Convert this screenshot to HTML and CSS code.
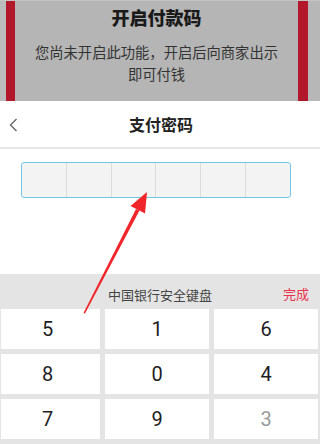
FILE: index.html
```html
<!DOCTYPE html>
<html lang="zh-CN">
<head>
<meta charset="utf-8">
<title>支付密码</title>
<link rel="stylesheet" href="styles.css">
</head>
<body>
<div class="page">
  <div class="banner">
    <div class="strip strip-left"></div>
    <div class="redbar redbar-left"></div>
    <div class="banner-content">
      <div class="banner-title">开启付款码</div>
      <div class="banner-text">您尚未开启此功能，开启后向商家出示<br>即可付钱</div>
    </div>
    <div class="redbar redbar-right"></div>
    <div class="strip strip-right"></div>
  </div>
  <div class="sheet">
    <div class="sheet-header">
      <svg class="back" width="10" height="16" viewBox="0 0 10 16"><polyline points="7.5,2 1.5,8 7.5,14" fill="none" stroke="#666" stroke-width="1.4"/></svg>
      <div class="sheet-title">支付密码</div>
    </div>
    <div class="pwd">
      <div class="cell"></div><div class="cell"></div><div class="cell"></div>
      <div class="cell"></div><div class="cell"></div><div class="cell"></div>
    </div>
  </div>
  <div class="keyboard">
    <div class="kb-bar">
      <span class="kb-name">中国银行安全键盘</span>
      <span class="kb-done">完成</span>
    </div>
    <div class="keys">
      <div class="key">5</div><div class="key">1</div><div class="key">6</div>
      <div class="key">8</div><div class="key">0</div><div class="key">4</div>
      <div class="key">7</div><div class="key">9</div><div class="key key-faded">3</div>
    </div>
  </div>
  <svg class="arrow" width="320" height="444" viewBox="0 0 320 444">
    <polygon points="83.5,313 85,313.5 139.5,210.5 136,208.9" fill="#f0262a"/>
    <polygon points="147,192 130.5,206 145,213.5" fill="#f0262a"/>
  </svg>
</div>
</body>
</html>
```
FILE: styles.css
```css
html, body {
  margin: 0;
  padding: 0;
  background: #ffffff;
}
.page {
  position: relative;
  width: 320px;
  height: 444px;
  overflow: hidden;
  font-family: "Noto Sans CJK SC", "Noto Sans", sans-serif;
}
.banner {
  display: flex;
  height: 101px;
  background: #b5b5b5;
  border-top: 1px solid #c4c4c4;
  box-sizing: border-box;
}
.strip-left {
  width: 6px;
  background: #bcbcbc;
}
.strip-right {
  width: 12px;
  background: #b7b7b7;
}
.redbar {
  background: #b2172c;
}
.redbar-left { width: 9px; }
.redbar-right { width: 10px; }
.banner-content {
  flex: 1;
  text-align: center;
  padding-top: 4px;
}
.banner-title {
  font-size: 18px;
  line-height: 24px;
  font-weight: 900;
  color: #1a1a1a;
}
.banner-text {
  margin-top: 12px;
  font-size: 14.3px;
  line-height: 22px;
  color: #333333;
}
.sheet {
  height: 173px;
  background: #ffffff;
}
.sheet-header {
  position: relative;
  height: 46px;
  display: flex;
  align-items: center;
  justify-content: center;
  border-bottom: 2px solid #e8e8e8;
}
.back {
  position: absolute;
  left: 9px;
  top: 16px;
}
.sheet-title {
  font-size: 16px;
  font-weight: bold;
  color: #222222;
  margin-left: 2px;
}
.pwd {
  margin: 13px 0 0 21px;
  width: 270px;
  height: 36px;
  box-sizing: border-box;
  border: 1.5px solid #70c9e2;
  border-radius: 3px;
  display: flex;
  background: #f3f3f3;
  overflow: hidden;
}
.cell {
  flex: 1;
  border-left: 1.5px solid #dcdcdc;
}
.cell:first-child {
  border-left: none;
}
.keyboard {
  height: 170px;
  background: #e4e4e4;
}
.kb-bar {
  position: relative;
  height: 35px;
  box-sizing: border-box;
  padding-top: 4px;
  line-height: 31px;
  text-align: center;
}
.kb-name {
  font-size: 13px;
  color: #444444;
}
.kb-done {
  position: absolute;
  right: 11px;
  top: 4px;
  font-size: 13px;
  color: #e8334d;
}
.keys {
  display: grid;
  grid-template-columns: 99px 104px 104px;
  grid-auto-rows: 40px;
  column-gap: 5px;
  row-gap: 5px;
  padding-left: 1px;
}
.key {
  background: #ffffff;
  display: flex;
  align-items: center;
  justify-content: center;
  font-family: Roboto, "Liberation Sans", sans-serif;
  font-size: 20px;
  color: #1e1e1e;
}
.key:nth-child(3n+1) {
  padding-right: 6px;
}
.key-faded {
  color: #9a9a9a;
}
.arrow {
  position: absolute;
  left: 0;
  top: 0;
  pointer-events: none;
}
```
